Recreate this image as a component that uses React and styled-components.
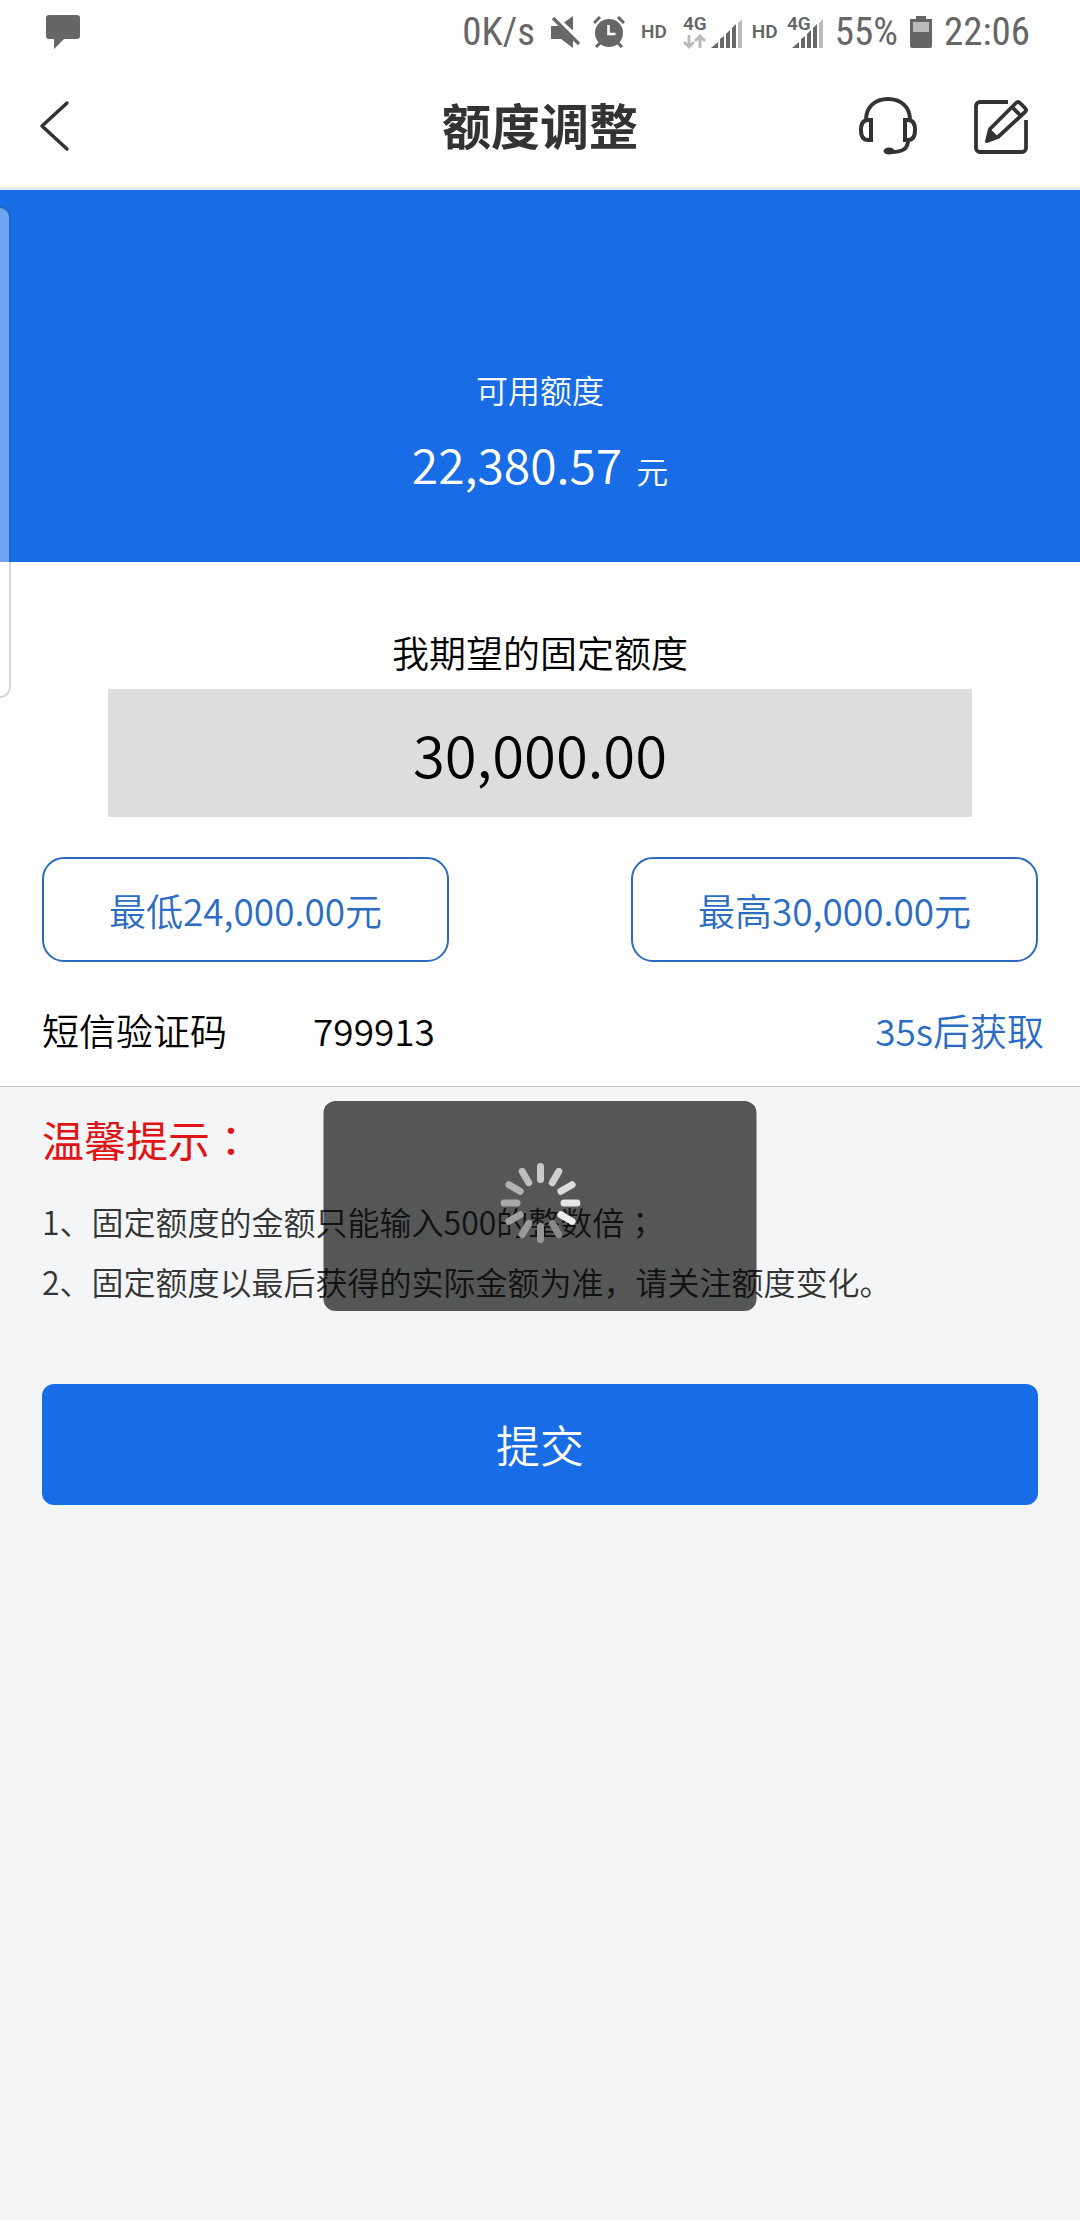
import React from "react";
import styled, { createGlobalStyle } from "styled-components";

const GlobalStyle = createGlobalStyle`
  * { box-sizing: border-box; }
  html, body { margin: 0; padding: 0; background: #f3f5f7; }
  body, button, input {
    font-family: "Noto Sans CJK SC", "Noto Sans", sans-serif;
    font-weight: 350;
  }
  button, input { margin: 0; padding: 0; border: 0; background: none; color: inherit; }
`;

const Page = styled.div`
  position: relative;
  min-height: 100vh;
  background: #f3f5f7;
  color: #000;
`;

const Glyph = styled.svg`
  display: block;
  flex: none;
`;

const StatusBar = styled.div`
  display: flex;
  align-items: center;
  justify-content: space-between;
  height: 64px;
  padding: 0 50px 0 46px;
  background: #fff;
  color: #666;
  font-family: "Roboto Condensed", "Liberation Sans Narrow", Roboto, sans-serif;
  font-size: 39px;
  font-weight: 400;
  line-height: 64px;
`;

const StatusGroup = styled.div`
  display: flex;
  align-items: center;
  gap: 12px;
`;

const Speed = styled.span`
  padding-right: 4px;
`;

const SmallMark = styled.span`
  font-family: Roboto, sans-serif;
  font-size: 19px;
  font-weight: 600;
  line-height: 24px;
  padding: ${(p) => (p.$spaced ? "0 4px" : "0")};
`;

const Network = styled.div`
  display: flex;
  align-items: center;
  gap: 9px;
`;

const Header = styled.header`
  display: grid;
  grid-template-columns: 1fr auto 1fr;
  align-items: center;
  height: 126px;
  padding: 0 38px;
  background: #fff;
  border-bottom: 3px solid #e4e8ec;
`;

const Title = styled.h1`
  margin: 0;
  padding-bottom: 4px;
  font-size: 49px;
  line-height: 64px;
  font-weight: 700;
  color: #333;
`;

const IconButton = styled.button`
  display: block;
  cursor: pointer;
`;

const HeaderActions = styled.div`
  display: flex;
  justify-content: flex-end;
  align-items: center;
  gap: 54px;
  padding-right: 14px;
`;

const Balance = styled.section`
  display: flex;
  flex-direction: column;
  align-items: center;
  gap: 16px;
  padding: 177px 0 63px;
  background: #186ce6;
  color: #fff;
`;

const BalanceLabel = styled.div`
  font-size: 32px;
  line-height: 44px;
`;

const BalanceValue = styled.div`
  display: flex;
  align-items: baseline;
  gap: 14px;
  font-size: 48px;
  line-height: 72px;
`;

const Unit = styled.span`
  font-size: 32px;
  line-height: 44px;
`;

const Form = styled.section`
  background: #fff;
  border-bottom: 1px solid #c4c6c8;
  padding: 62px 42px 28px;
`;

const AmountField = styled.label`
  display: flex;
  flex-direction: column;
  align-items: center;
  gap: 9px;
  margin: 0 66px;
  font-size: 37px;
  line-height: 56px;
`;

const AmountInput = styled.input`
  width: 100%;
  height: 128px;
  background: #ddd;
  font-size: 58px;
  text-align: center;
  border-radius: 0;
`;

const LimitRow = styled.div`
  display: flex;
  justify-content: space-between;
  margin-top: 40px;
`;

const LimitButton = styled.button`
  width: 407px;
  height: 105px;
  border: 2px solid #2c6abf;
  border-radius: 22px;
  color: #2b6cc4;
  font-size: 37px;
  cursor: pointer;
`;

const CodeRow = styled.div`
  display: flex;
  align-items: center;
  margin-top: 40px;
  font-size: 37px;
  line-height: 56px;
`;

const CodeLabel = styled.label`
  width: 271px;
`;

const CodeInput = styled.input`
  flex: 1;
  min-width: 0;
  height: 56px;
  font-size: 37px;
`;

const CodeButton = styled.button`
  margin-right: -6px;
  color: #2b6cc4;
  font-size: 37px;
  cursor: pointer;
`;

const Tips = styled.section`
  position: relative;
  padding: 22px 42px 0;
`;

const TipsTitle = styled.h2`
  margin: 0 0 22px;
  font-size: 42px;
  line-height: 60px;
  font-weight: 400;
  color: #e01414;
`;

const Tip = styled.p`
  margin: 0;
  font-size: 32px;
  line-height: 60px;
  color: #333;
`;

const Mid = styled.span`
  font-family: "Noto Sans CJK KR", sans-serif;
`;

const Loader = styled.div`
  position: absolute;
  top: 14px;
  left: 50%;
  display: flex;
  align-items: center;
  justify-content: center;
  width: 433px;
  height: 210px;
  padding-bottom: 6px;
  transform: translateX(-50%);
  border-radius: 12px;
  background: rgba(0, 0, 0, 0.65);
`;

const Submit = styled.button`
  display: block;
  width: calc(100% - 84px);
  height: 121px;
  margin: 73px 42px 0;
  padding-bottom: 2px;
  border-radius: 12px;
  background: #186ce6;
  color: #fff;
  font-size: 44px;
  cursor: pointer;
`;

const EdgeHandle = styled.div`
  position: absolute;
  top: 206px;
  left: 0;
  width: 11px;
  height: 492px;
  border: 2px solid rgba(70, 70, 70, 0.22);
  border-left: 0;
  border-radius: 0 14px 14px 0;
  background: rgba(255, 255, 255, 0.38);
  background-clip: padding-box;
`;

const MessageIcon = () => (
  <Glyph width="34" height="34" viewBox="0 0 34 34" fill="#666">
    <path d="M3 0h28a3 3 0 0 1 3 3v18a3 3 0 0 1-3 3H18L8 34V24H3a3 3 0 0 1-3-3V3a3 3 0 0 1 3-3z" />
  </Glyph>
);

const MuteIcon = () => (
  <Glyph width="30" height="32" viewBox="0 0 30 32" fill="#666">
    <path d="M0 10h8l14 14v8L10 23H0z" />
    <path d="M13 6.500L22 0v14.500z" />
    <path d="M2 2l26 26" stroke="#666" strokeWidth="3.200" />
  </Glyph>
);

const AlarmIcon = () => (
  <Glyph width="32" height="32" viewBox="0 0 32 32" fill="none" stroke="#666">
    <circle cx="16" cy="17" r="14" fill="#666" stroke="none" />
    <path d="M1 7l6-6M31 7l-6-6M3 31l5-5M29 31l-5-5" strokeWidth="3" />
    <path d="M15.500 9v9h7" stroke="#fff" strokeWidth="2.600" />
  </Glyph>
);

const SignalBars = ({ x }) => (
  <g fill="#666">
    <path d={`M${x} 32l7-6v6z`} />
    <path d={`M${x + 9} 32v-9l4-3v12z`} />
    <path d={`M${x + 15} 32v-14l4-4v18z`} />
    <path d={`M${x + 21} 32v-20l4-4v24z`} />
    <path d={`M${x + 27} 32v-25l4-4v29z`} fill="#bbb" />
  </g>
);

const SignalText = () => (
  <text
    x="0"
    y="14"
    fill="#666"
    stroke="#fff"
    strokeWidth="3"
    paintOrder="stroke"
    fontFamily="Roboto, sans-serif"
    fontSize="19"
    fontWeight="600"
  >
    4G
  </text>
);

const SignalWithData = () => (
  <Glyph width="60" height="44" viewBox="0 -6 60 44">
    <SignalText />
    <path d="M6 19v11M1 26l5 5 5-5M17 32V21M12 25l5-5 5 5" fill="none" stroke="#bbb" strokeWidth="3" />
    <SignalBars x={28} />
  </Glyph>
);

const SignalIcon = () => (
  <Glyph width="36" height="44" viewBox="0 -6 36 44">
    <SignalBars x={5} />
    <SignalText />
  </Glyph>
);

const BatteryIcon = () => (
  <Glyph width="22" height="32" viewBox="0 0 22 32">
    <path d="M6 0h10v3h6v27a2 2 0 0 1-2 2H2a2 2 0 0 1-2-2V3h6z" fill="#666" />
    <path d="M3 6h16v10H3z" fill="#bbb" />
  </Glyph>
);

const BackIcon = () => (
  <Glyph width="34" height="52" viewBox="0 0 34 52" fill="none" stroke="#333" strokeWidth="3.500" strokeLinecap="round" strokeLinejoin="round">
    <path d="M29 3L4 26l25 23" />
  </Glyph>
);

const HeadsetIcon = () => (
  <Glyph width="60" height="60" viewBox="0 0 60 60" fill="none" stroke="#333" strokeWidth="4">
    <path d="M8 24C8 11 17 3 30 3s22 8 22 21" />
    <path d="M13 24v20h-3c-5 0-7-4-7-10s2-10 7-10z" />
    <path d="M47 24v20h3c5 0 7-4 7-10s-2-10-7-10z" />
    <path d="M50 44c0 8-4 12-17 12" />
    <ellipse cx="31" cy="55" rx="5.500" ry="3.500" fill="#333" stroke="none" />
  </Glyph>
);

const EditIcon = () => (
  <Glyph width="56" height="56" viewBox="0 0 56 56" fill="none" stroke="#333" strokeWidth="3.800" strokeLinecap="round" strokeLinejoin="round">
    <path d="M36 4H8a4 4 0 0 0-4 4v42a4 4 0 0 0 4 4h42a4 4 0 0 0 4-4V22" strokeLinecap="butt" />
    <path d="M44 5q2-2 4 0l5 5q2 2 0 4L26 39l-11 4 3-12zM40 9l9 9" />
    <path d="M15 43l3-11 7 7z" fill="#333" strokeWidth="2" />
  </Glyph>
);

const spokes = [
  "#c8c8c8", "#d0d0d0", "#dcdcdc", "#e4e4e4", "#eee", "#888",
  "#969696", "#999", "#a0a0a0", "#a9a9a9", "#b2b2b2", "#bdbdbd",
];

const Spinner = () => (
  <Glyph width="80" height="80" viewBox="0 0 80 80" strokeWidth="7" strokeLinecap="round">
    {spokes.map((color, i) => (
      <path key={i} d="M40 3.500v13" stroke={color} transform={`rotate(${i * 30} 40 40)`} />
    ))}
  </Glyph>
);

export default function App() {
  return (
    <Page>
      <GlobalStyle />
      <StatusBar>
        <MessageIcon />
        <StatusGroup>
          <Speed>0K/s</Speed>
          <MuteIcon />
          <AlarmIcon />
          <SmallMark $spaced>HD</SmallMark>
          <Network>
            <SignalWithData />
            <SmallMark>HD</SmallMark>
            <SignalIcon />
          </Network>
          <span>55%</span>
          <BatteryIcon />
          <span>22:06</span>
        </StatusGroup>
      </StatusBar>
      <Header>
        <IconButton type="button" aria-label="返回">
          <BackIcon />
        </IconButton>
        <Title>额度调整</Title>
        <HeaderActions>
          <IconButton type="button" aria-label="客服">
            <HeadsetIcon />
          </IconButton>
          <IconButton type="button" aria-label="编辑">
            <EditIcon />
          </IconButton>
        </HeaderActions>
      </Header>
      <main>
        <Balance>
          <BalanceLabel>可用额度</BalanceLabel>
          <BalanceValue>
            22,380.57<Unit>元</Unit>
          </BalanceValue>
        </Balance>
        <Form>
          <AmountField>
            我期望的固定额度
            <AmountInput type="text" defaultValue="30,000.00" />
          </AmountField>
          <LimitRow>
            <LimitButton type="button">最低24,000.00元</LimitButton>
            <LimitButton type="button">最高30,000.00元</LimitButton>
          </LimitRow>
          <CodeRow>
            <CodeLabel htmlFor="code">短信验证码</CodeLabel>
            <CodeInput id="code" type="text" defaultValue="799913" />
            <CodeButton type="button">35s后获取</CodeButton>
          </CodeRow>
        </Form>
        <Tips>
          <TipsTitle>温馨提示<Mid>：</Mid></TipsTitle>
          <Tip>1、固定额度的金额只能输入500的整数倍<Mid>；</Mid></Tip>
          <Tip>2、固定额度以最后获得的实际金额为准，请关注额度变化。</Tip>
          <Loader role="status" aria-label="加载中">
            <Spinner />
          </Loader>
        </Tips>
        <Submit type="submit">提交</Submit>
      </main>
      <EdgeHandle />
    </Page>
  );
}
